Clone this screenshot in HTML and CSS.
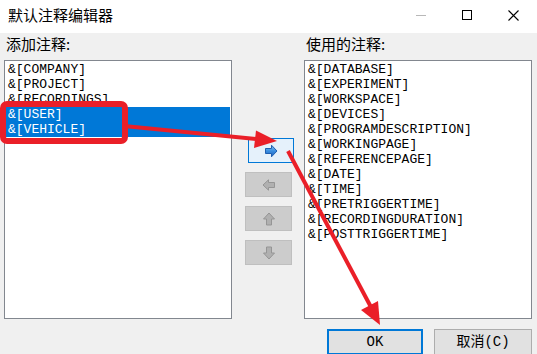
FILE: index.html
```html
<!DOCTYPE html>
<html>
<head>
<meta charset="utf-8">
<link rel="stylesheet" href="styles.css">
</head>
<body>
<div class="window">
  <div class="titlebar">
    <span class="title">默认注释编辑器</span>
    <div class="caption">
      <span class="cap-btn cap-min"><span class="min-line"></span></span>
      <span class="cap-btn"><span class="max-box"></span></span>
      <span class="cap-btn">
        <svg width="11" height="11" viewBox="0 0 11 11"><path d="M0.5 0.5 L10.5 10.5 M10.5 0.5 L0.5 10.5" stroke="#000" stroke-width="1.1" fill="none"/></svg>
      </span>
    </div>
  </div>
  <div class="content">
    <div class="panel">
      <div class="label">添加注释:</div>
      <ul class="list">
        <li>&amp;[COMPANY]</li>
        <li>&amp;[PROJECT]</li>
        <li>&amp;[RECORDINGS]</li>
        <li class="sel">&amp;[USER]</li>
        <li class="sel">&amp;[VEHICLE]</li>
      </ul>
    </div>
    <div class="mid">
      <button class="abtn focus">
        <svg width="14" height="14" viewBox="0 0 14 14">
          <defs><linearGradient id="gb" x1="0" y1="0" x2="0" y2="1"><stop offset="0" stop-color="#7fc0f5"/><stop offset="0.5" stop-color="#3a8ee0"/><stop offset="1" stop-color="#1c62c0"/></linearGradient></defs>
          <path d="M1.5 4.5 H7.5 V1.2 L13 7 L7.5 12.8 V9.5 H1.5 Z" fill="url(#gb)" stroke="#1f5fb0" stroke-width="1"/>
        </svg>
      </button>
      <button class="abtn">
        <svg width="14" height="12" viewBox="0 0 14 12"><path d="M12.5 3.5 H6.5 V0.8 L1 6 L6.5 11.2 V8.5 H12.5 Z" fill="#b0b0b0" stroke="#959595" stroke-width="1"/></svg>
      </button>
      <button class="abtn">
        <svg width="14" height="14" viewBox="0 0 14 14"><path d="M4.5 13 V7 H1.5 L7 1 L12.5 7 H9.5 V13 Z" fill="#b0b0b0" stroke="#959595" stroke-width="1"/></svg>
      </button>
      <button class="abtn">
        <svg width="14" height="14" viewBox="0 0 14 14"><path d="M4.5 1 V7 H1.5 L7 13 L12.5 7 H9.5 V1 Z" fill="#b0b0b0" stroke="#959595" stroke-width="1"/></svg>
      </button>
    </div>
    <div class="panel">
      <div class="label">使用的注释:</div>
      <ul class="list">
        <li>&amp;[DATABASE]</li>
        <li>&amp;[EXPERIMENT]</li>
        <li>&amp;[WORKSPACE]</li>
        <li>&amp;[DEVICES]</li>
        <li>&amp;[PROGRAMDESCRIPTION]</li>
        <li>&amp;[WORKINGPAGE]</li>
        <li>&amp;[REFERENCEPAGE]</li>
        <li>&amp;[DATE]</li>
        <li>&amp;[TIME]</li>
        <li>&amp;[PRETRIGGERTIME]</li>
        <li>&amp;[RECORDINGDURATION]</li>
        <li>&amp;[POSTTRIGGERTIME]</li>
      </ul>
    </div>
  </div>
  <div class="footer">
    <button class="dbtn ok">OK</button>
    <button class="dbtn cancel">取消(C)</button>
  </div>
  <svg class="overlay" width="537" height="354" viewBox="0 0 537 354">
    <rect x="3" y="104" width="122" height="37" rx="4" fill="none" stroke="#ea1f28" stroke-width="6"/>
    <line x1="124" y1="126" x2="262" y2="139.6" stroke="#ea1f28" stroke-width="4"/>
    <polygon points="277,141 256,130.5 254,148" fill="#ea1f28"/>
    <line x1="288" y1="151" x2="372" y2="309" stroke="#ea1f28" stroke-width="4"/>
    <polygon points="380,325 361,310 378,301" fill="#ea1f28"/>
  </svg>
</div>
</body>
</html>
```
FILE: styles.css
```css
html, body {
  margin: 0;
  padding: 0;
}
body {
  width: 537px;
  height: 354px;
  overflow: hidden;
  background: #f0f0f0;
}
.window {
  position: relative;
  width: 537px;
  height: 354px;
  overflow: hidden;
  background: #f0f0f0;
  font-family: "Noto Sans CJK SC", sans-serif;
}
.titlebar {
  height: 33px;
  background: #ffffff;
  display: flex;
  align-items: center;
  justify-content: space-between;
}
.title {
  padding-left: 8px;
  font-size: 15px;
  color: #000;
  line-height: 20px;
  margin-top: -3px;
}
.caption {
  display: flex;
  height: 100%;
  margin-right: 1px;
}
.cap-btn {
  width: 46px;
  height: 30px;
  display: flex;
  align-items: center;
  justify-content: center;
}
.cap-btn svg { display: block; }
.min-line {
  width: 10px;
  height: 1px;
  background: #b8b8b8;
}
.max-box {
  width: 8px;
  height: 8px;
  border: 1px solid #000;
}
.content {
  display: grid;
  grid-template-columns: 228px 72px 228px;
  padding-left: 4px;
}
.label {
  height: 27px;
  line-height: 22px;
  padding-left: 2px;
  font-size: 15px;
  color: #000;
}
.list {
  list-style: none;
  margin: 0;
  padding: 1px 1px;
  height: 259px;
  box-sizing: border-box;
  border: 1px solid #82878f;
  background: #fff;
  font-family: "Liberation Mono", "Noto Sans CJK SC", monospace;
  font-size: 13px;
  color: #000;
}
.list li {
  height: 15px;
  line-height: 15px;
  padding-left: 2px;
  white-space: nowrap;
}
.list li.sel {
  background: #0078d7;
  color: #fff;
}
.mid {
  display: flex;
  flex-direction: column;
  align-items: flex-start;
  padding-top: 105px;
  padding-left: 13px;
  gap: 9px;
}
.abtn {
  width: 47px;
  height: 25px;
  padding: 0;
  margin: 0;
  box-sizing: border-box;
  border: 1px solid #bfbfbf;
  background: #cccccc;
  display: flex;
  align-items: center;
  justify-content: center;
}
.abtn svg { display: block; }
.abtn.focus {
  margin-left: 3px;
  width: 46px;
  border: 1px solid #0078d7;
  background: #e5f1fb;
}
.footer {
  display: flex;
  justify-content: flex-end;
  gap: 11px;
  padding-right: 5px;
  margin-top: 10px;
}
.dbtn {
  height: 26px;
  margin: 0;
  padding: 0;
  box-sizing: border-box;
  background: #e1e1e1;
  font-family: "Liberation Mono", "Noto Sans CJK SC", monospace;
  font-size: 14px;
  color: #000;
  line-height: 20px;
}
.ok {
  width: 96px;
  border: 2px solid #0078d7;
}
.cancel {
  width: 98px;
  border: 1px solid #adadad;
}
.overlay {
  position: absolute;
  left: 0;
  top: 0;
  pointer-events: none;
}
```
